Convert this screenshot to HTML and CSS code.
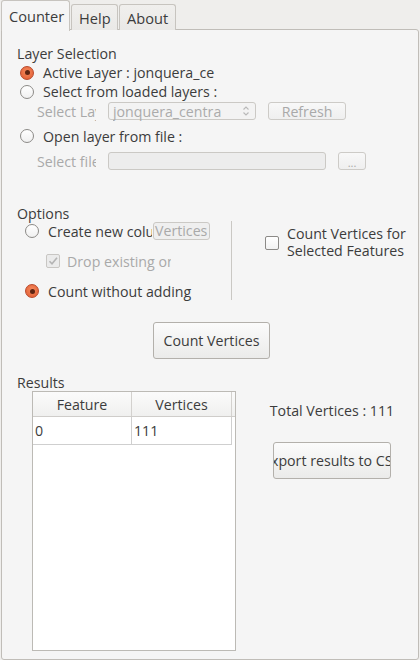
FILE: index.html
```html
<!DOCTYPE html>
<html>
<head>
<meta charset="utf-8">
<link rel="stylesheet" href="styles.css">
</head>
<body>
<div class="tabs">
  <div class="tab active">Counter</div>
  <div class="tab">Help</div>
  <div class="tab">About</div>
</div>
<div class="panel">
  <div class="title t-layer">Layer Selection</div>
  <div class="row r-opt"><span class="radio checked"></span><span class="lbl">Active Layer : jonquera_ce</span></div>
  <div class="row r-opt"><span class="radio"></span><span class="lbl">Select from loaded layers :</span></div>
  <div class="row r-sub">
    <span class="sublbl">Select Layer</span>
    <div class="combo"><span class="combo-text">jonquera_central_points</span>
      <svg class="spin" width="8" height="12" viewBox="0 0 8 12"><path d="M1.5 4.5 L4 2 L6.5 4.5" fill="none" stroke="#b9b9b9" stroke-width="1.1"/><path d="M1.5 7.5 L4 10 L6.5 7.5" fill="none" stroke="#b9b9b9" stroke-width="1.1"/></svg>
    </div>
    <div class="btn small disabled refresh">Refresh</div>
  </div>
  <div class="row r-opt r3"><span class="radio"></span><span class="lbl">Open layer from file :</span></div>
  <div class="row r-sub r-file">
    <span class="sublbl">Select file</span>
    <div class="input fileinput"></div>
    <div class="btn small disabled dots">...</div>
  </div>

  <div class="title t-options">Options</div>
  <div class="options">
    <div class="opt-left">
      <div class="row o-row o-create"><span class="radio"></span><span class="lbl clip create-lbl">Create new column</span><div class="input vert-input">Vertices</div></div>
      <div class="row o-row o-drop"><span class="check disabled"><svg width="12" height="12" viewBox="0 0 12 12"><path d="M2.5 6.2 L5 8.8 L10 2.8" fill="none" stroke="#b4b4b4" stroke-width="1.6"/></svg></span><span class="lbl clip drop-lbl dis">Drop existing one</span></div>
      <div class="row o-row o-count"><span class="radio checked"></span><span class="lbl">Count without adding</span></div>
    </div>
    <div class="vsep"></div>
    <div class="opt-right">
      <span class="check"></span>
      <div class="two"><div class="line">Count Vertices for</div><div class="line">Selected Features</div></div>
    </div>
  </div>

  <div class="btnrow"><div class="btn big">Count Vertices</div></div>

  <div class="title t-results">Results</div>
  <div class="results">
    <div class="table">
      <div class="thead">
        <div class="th c1">Feature</div>
        <div class="th c2">Vertices</div>
        <div class="th c3"></div>
      </div>
      <div class="tr">
        <div class="td c1">0</div>
        <div class="td c2">111</div>
      </div>
    </div>
    <div class="res-right">
      <div class="total">Total Vertices : 111</div>
      <div class="btn big export"><span>Export results to CSV</span></div>
    </div>
  </div>
</div>
</body>
</html>
```

FILE: styles.css
```css
* { box-sizing: border-box; }
html, body { margin: 0; padding: 0; }
body {
  width: 420px;
  height: 660px;
  overflow: hidden;
  background: #efeeec;
  font-family: "Open Sans", "DejaVu Sans", sans-serif;
  font-size: 14.2px;
  color: #3c3c3c;
}
.tabs {
  display: flex;
  align-items: flex-end;
  height: 30px;
  padding-left: 1px;
  position: relative;
  z-index: 2;
}
.tab {
  height: 26px;
  padding: 0 7px;
  display: flex;
  align-items: center;
  border: 1px solid #c7c4bf;
  border-bottom: none;
  border-radius: 3px 3px 0 0;
  background: linear-gradient(#f0efed, #eae9e7);
  font-size: 14.6px;
  margin-right: 1px;
  white-space: nowrap;
}
.tab.active {
  background: #f5f5f5;
  margin-bottom: -1px;
  height: 31px;
  width: 69px;
}
.tab:nth-child(2) { width: 47px; }
.tab:nth-child(3) { width: 57px; margin-right: 0; }

.panel {
  margin: -1px 1px 0 1px;
  height: 631px;
  border: 1px solid #c0bdb8;
  border-radius: 0 3px 3px 3px;
  background: #f5f5f5;
  padding: 0 0 0 15px;
  position: relative;
  z-index: 1;
}
.title {
  height: 18px;
  line-height: 18px;
}
.t-layer { margin-top: 14px; height: 19px; line-height: 19px; }
.row { display: flex; align-items: center; white-space: nowrap; }
.r-opt { height: 19px; }
.r-opt .radio { margin-left: 3px; margin-right: 9px; }
.r3 { margin-top: 5px; height: 20px; }
.dis { color: #a9a9a9; }

.radio {
  width: 14px;
  height: 14px;
  border-radius: 50%;
  border: 1px solid #8c8a87;
  background: linear-gradient(#ffffff, #f0f0f0);
  flex: none;
  position: relative;
}
.radio.checked {
  border-color: #b9482a;
  background: radial-gradient(circle at 50% 40%, #f58a5e, #e05a2f);
}
.radio.checked::after {
  content: "";
  position: absolute;
  left: 3.5px;
  top: 3.5px;
  width: 5px;
  height: 5px;
  border-radius: 50%;
  background: #5d2412;
}
.check {
  width: 14px;
  height: 14px;
  border: 1px solid #8c8a87;
  border-radius: 2px;
  background: linear-gradient(#ffffff, #f2f2f2);
  flex: none;
  display: flex;
  align-items: center;
  justify-content: center;
}
.check.disabled {
  border-color: #c8c6c3;
  background: #ebebeb;
}

.r-sub { height: 20px; }
.sublbl {
  margin-left: 20px;
  width: 59px;
  margin-right: 2px;
  overflow: hidden;
  color: #a9a9a9;
  flex: none;
}
.combo {
  margin-left: 10px;
  width: 148px;
  height: 18px;
  border: 1px solid #cbc9c5;
  border-radius: 3px;
  background: #f3f3f3;
  display: flex;
  align-items: center;
  padding-left: 4px;
  padding-right: 5px;
  color: #ababab;
  flex: none;
}
.combo-text { width: 108px; overflow: hidden; }
.spin { margin-left: auto; }
.btn {
  border: 1px solid #b6b3ae;
  border-radius: 3px;
  background: linear-gradient(#fbfbfb, #ebebea);
  display: flex;
  align-items: center;
  justify-content: center;
  white-space: nowrap;
  flex: none;
}
.btn.small { height: 18px; }
.btn.disabled {
  color: #a9a9a9;
  border-color: #cdcbc7;
  background: linear-gradient(#f8f8f8, #efefef);
}
.refresh { margin-left: 12px; width: 78px; }
.r-file { margin-top: 5px; }
.input {
  height: 18px;
  border: 1px solid #cbc9c5;
  border-radius: 3px;
  background: #ededed;
  flex: none;
}
.fileinput { margin-left: 10px; width: 218px; }
.dots { margin-left: 12px; width: 28px; font-size: 11px; padding-top: 2px; }

.t-options { margin-top: 34px; }
.options { display: flex; margin-top: -2px; }
.opt-left { width: 214px; flex: none; }
.o-row { height: 20px; }
.o-row .radio { margin-left: 8px; margin-right: 9px; }
.create-lbl { width: 104px; overflow: hidden; flex: none; }
.vert-input {
  width: 57px;
  margin-left: 1px;
  background: #efefef;
  color: #a9a9a9;
  line-height: 16px;
  padding-left: 1px;
  overflow: hidden;
}
.o-drop { margin-top: 10px; }
.o-drop .check { margin-left: 29px; margin-right: 7px; }
.drop-lbl { width: 104px; overflow: hidden; }
.o-count { margin-top: 10px; }
.vsep { width: 1px; height: 79px; background: #cac8c4; flex: none; }
.opt-right {
  display: flex;
  align-items: center;
  padding-left: 33px;
  margin-top: 3px;
  height: 36px;
  white-space: nowrap;
}
.opt-right .check { margin-right: 8px; margin-top: 2px; }
.two { display: flex; flex-direction: column; }
.two .line { height: 17px; line-height: 17px; }

.btnrow { display: flex; justify-content: center; padding-right: 15px; margin-top: 21px; }
.btn.big {
  height: 37px;
  border-color: #b3b0ab;
}
.btnrow .btn { width: 117px; margin-left: 3px; }

.t-results { margin-top: 15px; height: 17px; line-height: 17px; }
.results { display: flex; }
.table {
  margin-left: 15px;
  width: 204px;
  height: 260px;
  border: 1px solid #bcbab5;
  background: #ffffff;
  flex: none;
}
.thead { display: flex; height: 25px; border-bottom: 1px solid #cfcdca; background: linear-gradient(#fbfbfb, #f0f0ef); }
.th { display: flex; align-items: center; justify-content: center; border-right: 1px solid #d3d1ce; }
.c1 { width: 99px; }
.c2 { width: 100px; }
.th.c3 { flex: 1; border-right: none; }
.tr { display: flex; height: 28px; }
.td {
  display: flex;
  align-items: center;
  padding-left: 2px;
  border-bottom: 1px solid #cfcfcf;
  border-right: 1px solid #cfcfcf;
}
.res-right {
  margin-left: 10px;
  width: 172px;
  display: flex;
  flex-direction: column;
  align-items: center;
}
.total { margin-top: 11px; height: 18px; line-height: 18px; }
.export { margin-top: 22px; width: 118px; overflow: hidden; }
```
